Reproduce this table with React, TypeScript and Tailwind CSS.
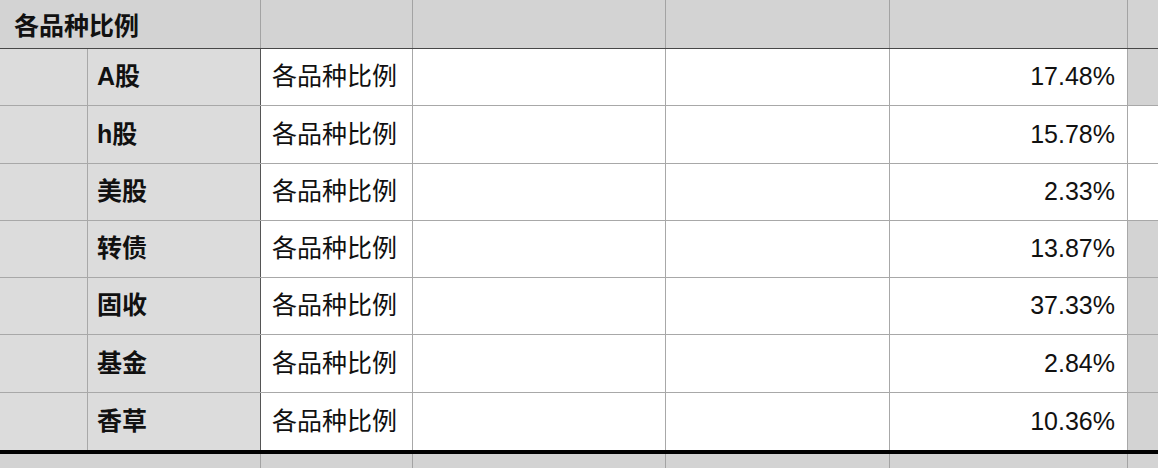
import React from "react";

const rows = [
    { name: "A股", label: "各品种比例", pct: "17.48%", edgeGray: true },
    { name: "h股", label: "各品种比例", pct: "15.78%", edgeGray: false },
    { name: "美股", label: "各品种比例", pct: "2.33%", edgeGray: false },
    { name: "转债", label: "各品种比例", pct: "13.87%", edgeGray: true },
    { name: "固收", label: "各品种比例", pct: "37.33%", edgeGray: true },
    { name: "基金", label: "各品种比例", pct: "2.84%", edgeGray: true },
    { name: "香草", label: "各品种比例", pct: "10.36%", edgeGray: true },
];

const heights = ["h-[57px]", "h-[58px]", "h-[57px]", "h-[57px]", "h-[57px]", "h-[58px]", "h-[61px]"];

export default function App() {
    return (
        <div
            className="w-[1158px] h-[468px] bg-[#d3d3d3] text-[#111] text-[25px] overflow-hidden"
            style={{ fontFamily: '"Liberation Sans", "Noto Sans CJK SC", sans-serif' }}
        >
            {/* header */}
            <div className="flex h-[49px] border-b border-[#474747] bg-[#d3d3d3]">
                <div className="w-[261px] flex items-center pl-[14px] pt-[5px] font-bold border-r border-[#a3a3a3]">
                    各品种比例
                </div>
                <div className="w-[152px] border-r border-[#a3a3a3]" />
                <div className="w-[253px] border-r border-[#a3a3a3]" />
                <div className="w-[224px] border-r border-[#a3a3a3]" />
                <div className="w-[238px] border-r border-[#a3a3a3]" />
                <div className="flex-1" />
            </div>

            {rows.map((r, i) => {
                const last = i === rows.length - 1;
                return (
                    <div
                        key={r.name}
                        className={[
                            "flex",
                            heights[i],
                            last ? "border-b-4 border-black" : "border-b border-[#a8a8a8]",
                        ].join(" ")}
                    >
                        <div className="w-[88px] bg-[#dcdcdc] border-r border-[#a8a8a8]" />
                        <div className="w-[173px] bg-[#dcdcdc] border-r border-[#555] flex items-center pl-[9px] font-bold">
                            {r.name}
                        </div>
                        <div className="w-[152px] bg-white border-r border-[#a8a8a8] flex items-center pl-[11px]">
                            {r.label}
                        </div>
                        <div className="w-[253px] bg-white border-r border-[#a8a8a8]" />
                        <div className="w-[224px] bg-white border-r border-[#a8a8a8]" />
                        <div className="w-[238px] bg-white border-r border-[#a8a8a8] flex items-center justify-end pr-[12px]">
                            {r.pct}
                        </div>
                        <div className={["flex-1", r.edgeGray ? "bg-[#d3d3d3]" : "bg-white"].join(" ")} />
                    </div>
                );
            })}

            {/* bottom strip */}
            <div className="flex h-[20px]">
                <div className="w-[261px] border-r border-[#a3a3a3]" />
                <div className="w-[152px] border-r border-[#a3a3a3]" />
                <div className="w-[253px] border-r border-[#a3a3a3]" />
                <div className="w-[224px] border-r border-[#a3a3a3]" />
                <div className="w-[238px] border-r border-[#a3a3a3]" />
                <div className="flex-1" />
            </div>
        </div>
    );
}
